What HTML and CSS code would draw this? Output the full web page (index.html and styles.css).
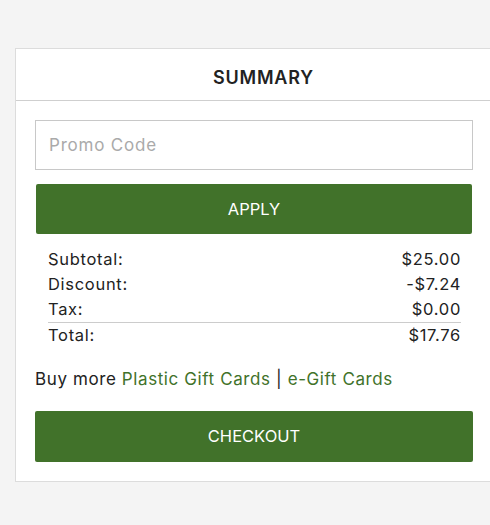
FILE: index.html
```html
<!DOCTYPE html>
<html>
<head>
<meta charset="utf-8">
<link rel="stylesheet" href="styles.css">
</head>
<body>
<div class="card">
  <div class="card-header">SUMMARY</div>
  <div class="card-body">
    <input class="promo" type="text" placeholder="Promo Code">
    <button class="btn btn-apply">APPLY</button>
    <div class="totals">
      <div class="row"><span>Subtotal:</span><span>$25.00</span></div>
      <div class="row"><span>Discount:</span><span>-$7.24</span></div>
      <div class="row"><span>Tax:</span><span>$0.00</span></div>
      <div class="row total"><span>Total:</span><span>$17.76</span></div>
    </div>
    <p class="buy-more">Buy more <a href="#">Plastic Gift Cards</a> | <a href="#">e-Gift Cards</a></p>
    <button class="btn btn-checkout">CHECKOUT</button>
  </div>
</div>
</body>
</html>
```

FILE: styles.css
```css
html, body {
  margin: 0;
  padding: 0;
  overflow: hidden;
  background: #f4f4f4;
  font-family: "Inter", "Noto Sans", sans-serif;
  color: #222;
}
.card {
  margin: 48px 0 0 15px;
  width: 497px;
  background: #fff;
  border: 1px solid #dcdcdc;
  box-sizing: border-box;
}
.card-header {
  height: 52px;
  padding-top: 5px;
  box-sizing: border-box;
  border-bottom: 1px solid #cfcfcf;
  display: flex;
  align-items: center;
  justify-content: center;
  font-weight: 600;
  font-size: 18px;
  letter-spacing: 0.8px;
  color: #222;
}
.card-body {
  padding: 19px 20px 19px 19px;
  width: 438px;
}
.promo {
  display: block;
  width: 100%;
  height: 50px;
  box-sizing: border-box;
  border: 1px solid #c8c8c8;
  padding: 0 13px;
  font-family: inherit;
  font-size: 17px;
  letter-spacing: 0.8px;
  color: #222;
  outline: none;
}
.promo::placeholder { color: #aaa; }
.btn {
  display: block;
  width: 100%;
  border: none;
  border-radius: 2px;
  background: #41722a;
  color: #fff;
  font-family: inherit;
  font-size: 16.5px;
  height: 50px;
  padding-bottom: 2px;
}
.btn-apply { margin-top: 14px; width: 436px; margin-left: 1px; }
.totals {
  margin: 13px 12px 0 13px;
  font-size: 16.5px;
  letter-spacing: 0.7px;
  line-height: 25px;
}
.row { display: flex; justify-content: space-between; }
.row.total { border-top: 1px solid #ccc; }
.buy-more {
  margin: 19px 0 0;
  font-size: 17px;
  letter-spacing: 0.6px;
  line-height: 24px;
}
.buy-more a { color: #41722a; text-decoration: none; }
.btn-checkout { margin-top: 20px; height: 51px; }
```
